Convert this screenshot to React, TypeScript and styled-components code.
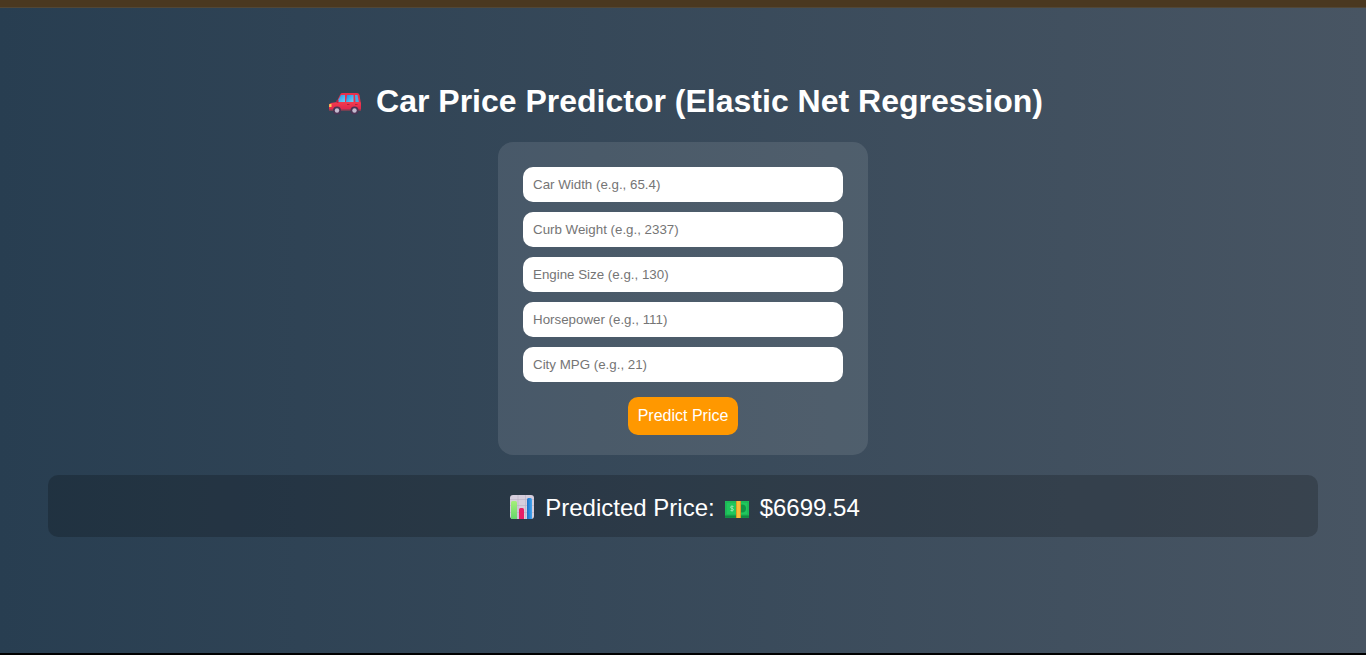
import React from "react";
import styled, { createGlobalStyle } from "styled-components";

const GlobalStyle = createGlobalStyle`
  *, *::before, *::after { box-sizing: border-box; }
  body { margin: 0; background: #000; font-family: Arial, "Liberation Sans", sans-serif; }
`;

const Page = styled.div`
  display: flex;
  flex-direction: column;
  min-height: 100vh;
`;

const TopBar = styled.div`
  height: 8px;
  background: #4a3820;
  border-bottom: 1px solid #514737;
`;

const Main = styled.main`
  flex: 1;
  display: flex;
  flex-direction: column;
  align-items: center;
  gap: 20px;
  margin-bottom: 2px;
  padding: 74px 48px 48px;
  color: #fff;
  background: linear-gradient(to right, #283e51, #485563);
`;

const Title = styled.h1`
  display: flex;
  align-items: center;
  gap: 9px;
  margin: 0;
  padding-bottom: 2px;
  font-size: 32px;
  line-height: 38px;
`;

const Form = styled.form`
  display: flex;
  flex-direction: column;
  align-items: center;
  gap: 10px;
  width: 370px;
  max-width: 100%;
  padding: 25px 25px 20px;
  border-radius: 15px;
  background: rgba(255, 255, 255, 0.1);
`;

const Field = styled.input`
  width: 100%;
  height: 35px;
  padding: 10px;
  border: 0;
  border-radius: 10px;
  background: #fff;
  font-family: inherit;
  &::placeholder { color: #757575; }
`;

const SubmitButton = styled.button`
  height: 38px;
  margin-top: 5px;
  padding: 10px;
  border: 0;
  border-radius: 10px;
  background: #ff9800;
  color: #fff;
  font-family: inherit;
  font-size: 16px;
  line-height: 18px;
  cursor: pointer;
`;

const Result = styled.output`
  display: flex;
  align-items: center;
  justify-content: center;
  gap: 10px;
  width: 100%;
  padding: 18px 16px 14px;
  border-radius: 10px;
  background: rgba(0, 0, 0, 0.2);
  font-size: 24px;
  line-height: 30px;
`;

const Icon = styled.svg<{ $width: number; $height: number }>`
  flex: none;
  width: ${({ $width }) => $width}px;
  height: ${({ $height }) => $height}px;
`;

const CarIcon = () => (
  <Icon $width={44} $height={34} viewBox="-5 0 44 34" aria-hidden="true">
    <defs>
      <linearGradient id="glass" x1="0" y1="0" x2="1" y2="1">
        <stop offset="0" stopColor="#158ee8" />
        <stop offset="1" stopColor="#76d3f7" />
      </linearGradient>
      <linearGradient id="paint" x1="0" y1="0" x2="0" y2="1">
        <stop offset="0" stopColor="#f33b4e" />
        <stop offset="1" stopColor="#dc244c" />
      </linearGradient>
    </defs>
    <path d="M14 9h15q2 0 2.5 2l1.5 9v5H7l1-6 4-8q.7-2 2-2z" fill="#e92f4b" />
    <path d="M13 11h4v7.5H8.8z" fill="url(#glass)" />
    <path d="M19 11h6.500v7.500H18z" fill="url(#glass)" />
    <path d="M27 11h2.500l1.500 7.500h-3.500z" fill="#4aabe6" />
    <path d="M3 19l6-1h22.500q1.500 0 1.500 2v5.500q0 1-1 1H2q-1 0-1-1v-4q0-2 2-2.500z" fill="url(#paint)" />
    <path d="M1 25.500h32v1.500H1z" fill="#744052" />
    <path d="M1.300 20h2.200v3H1z" fill="#ffc653" />
    <circle cx="9" cy="26.500" r="4" fill="#493454" />
    <circle cx="9" cy="26.500" r="2.200" fill="#c5bbd0" />
    <circle cx="26.500" cy="26.500" r="4" fill="#493454" />
    <circle cx="26.500" cy="26.500" r="2.200" fill="#c5bbd0" />
    <path d="M9.500 16v3" stroke="#ba2345" strokeWidth="2" />
    <path d="M19 20.500h2.500M27 20.500h2.500" stroke="#b51f40" />
  </Icon>
);

const ChartIcon = () => (
  <Icon $width={29} $height={25} viewBox="-4 2 29 25" overflow="visible" aria-hidden="true">
    <defs>
      <linearGradient id="green" x1="0" y1="0" x2="0" y2="1">
        <stop offset="0" stopColor="#a6ef79" />
        <stop offset="1" stopColor="#67d76c" />
      </linearGradient>
      <linearGradient id="blue" x1="0" y1="0" x2="1" y2="0">
        <stop offset="0" stopColor="#1870c9" />
        <stop offset="1" stopColor="#46a5ee" />
      </linearGradient>
    </defs>
    <rect y="1" width="24" height="24" rx="3" fill="#d6cedd" />
    <path d="M0 5.500h24M0 11.500h24M0 18.500h24M8 1v24M15.500 1v24" stroke="#bbb1c4" strokeWidth=".6" />
    <path d="M2.500 7h3q1.500 0 1.500 1.500V25H2q-1 0-1-1V8.500Q1 7 2.500 7z" fill="url(#green)" />
    <path d="M10.500 14h2q1.500 0 1.500 1.500V25H9v-9.500q0-1.500 1.500-1.500z" fill="#e71e65" />
    <path d="M18.500 4h2q1.500 0 1.500 1.500V25h-5V5.500Q17 4 18.500 4z" fill="url(#blue)" />
  </Icon>
);

const MoneyIcon = () => (
  <Icon $width={25} $height={25} viewBox="0 0 25 25" aria-hidden="true">
    <rect y="5" width="24" height="17" fill="#16994b" />
    <rect y="5" width="24" height="15" fill="#20c75d" />
    <rect x="1" y="6" width="22" height="13" fill="none" stroke="#1bad52" />
    <circle cx="17" cy="12.500" r="4" fill="#129446" />
    <path d="M0 20h24M0 21h24" stroke="#108541" />
    <path d="M11 5h5v17h-5z" fill="#d99925" />
    <path d="M12 5h3v17h-3z" fill="#f9bc38" />
    <path d="M8.500 10.500q-3-1-3 .7 0 1 1.500 1.200t1.500 1.300q0 1.700-3 .8M7 9.500v6" fill="none" stroke="#9ce7af" strokeWidth=".9" />
  </Icon>
);

const fields = [
  { name: "carwidth", label: "Car Width", example: "65.4" },
  { name: "curbweight", label: "Curb Weight", example: "2337" },
  { name: "enginesize", label: "Engine Size", example: "130" },
  { name: "horsepower", label: "Horsepower", example: "111" },
  { name: "citympg", label: "City MPG", example: "21" },
];

export default function App() {
  return (
    <>
      <GlobalStyle />
      <Page>
        <TopBar />
        <Main>
          <Title>
            <CarIcon />
            Car Price Predictor (Elastic Net Regression)
          </Title>
          <Form onSubmit={(event) => event.preventDefault()}>
            {fields.map(({ name, label, example }) => (
              <Field
                key={name}
                name={name}
                aria-label={label}
                inputMode="decimal"
                placeholder={`${label} (e.g., ${example})`}
              />
            ))}
            <SubmitButton type="submit">Predict Price</SubmitButton>
          </Form>
          <Result>
            <ChartIcon />
            <span>Predicted Price:</span>
            <MoneyIcon />
            <span>$6699.54</span>
          </Result>
        </Main>
      </Page>
    </>
  );
}
